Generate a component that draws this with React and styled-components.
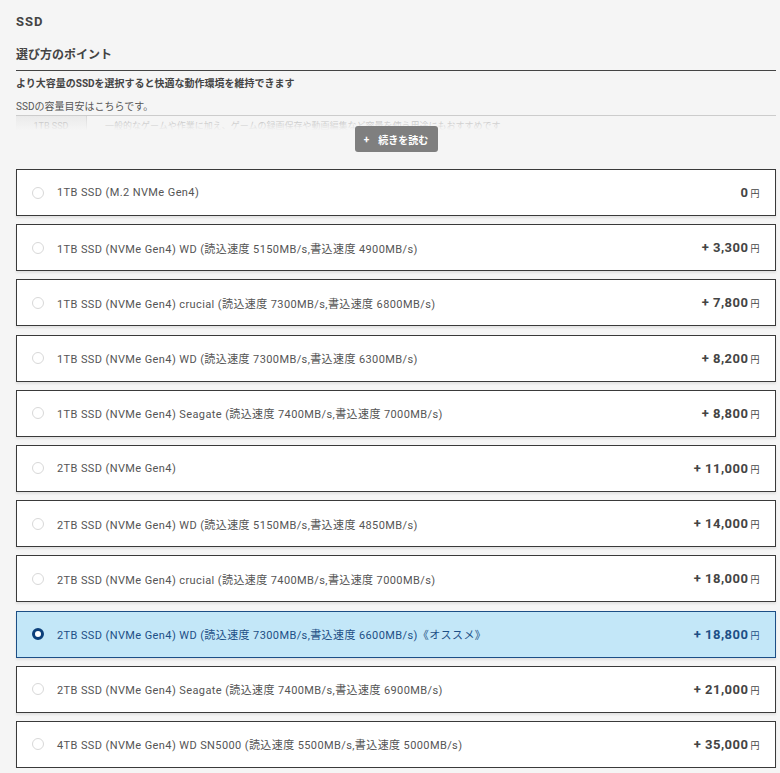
import React from "react";
import styled, { createGlobalStyle } from "styled-components";

const GlobalStyle = createGlobalStyle`
  body {
    margin: 0;
    background: #f5f5f5;
    font-family: Roboto, "Noto Sans CJK JP", sans-serif;
    color: #444;
  }
`;

const Page = styled.div`
  padding: 13px 4px 0 16px;
`;

const Title = styled.h2`
  margin: 0;
  font-size: 13px;
  font-weight: 700;
  letter-spacing: 1px;
  color: #444;
  line-height: 18px;
`;

const PointHeading = styled.h3`
  margin: 15px 0 0;
  font-size: 12px;
  font-weight: 700;
  color: #444;
  line-height: 18px;
  padding-bottom: 6px;
  border-bottom: 1px solid #444;
`;

const Lead = styled.p`
  margin: 6px 0 0;
  font-size: 10px;
  font-weight: 700;
  color: #444;
  line-height: 14px;
`;

const Note = styled.p`
  margin: 9px 0 0;
  font-size: 10px;
  color: #555;
  line-height: 14px;
`;

const Fold = styled.div`
  position: relative;
  height: 16px;
  overflow: hidden;
  border-top: 1px solid #ccc;
  margin-top: 1px;
  &::after {
    content: "";
    position: absolute;
    inset: 0;
    background: linear-gradient(rgba(245, 245, 245, 0.3), #f5f5f5 90%);
  }
`;

const FoldRow = styled.div`
  display: flex;
  font-size: 9px;
  color: #888;
  line-height: 20px;
`;

const FoldHead = styled.div`
  width: 70px;
  text-align: center;
  background: #e6e6e6;
  border-right: 1px solid #ccc;
`;

const FoldBody = styled.div`
  padding-left: 18px;
  white-space: nowrap;
`;

const MoreWrap = styled.div`
  display: flex;
  justify-content: center;
  margin-top: -6px;
  position: relative;
`;

const MoreButton = styled.button`
  display: flex;
  align-items: center;
  justify-content: center;
  gap: 9px;
  background: #7f7f7f;
  color: #fff;
  border: none;
  border-radius: 3px;
  font-family: Roboto, "Noto Sans CJK JP", sans-serif;
  font-size: 10px;
  font-weight: 700;
  height: 26px;
  width: 83px;
  padding: 0;
`;

const List = styled.div`
  display: flex;
  flex-direction: column;
  gap: 8.2px;
  margin-top: 17px;
`;

const Card = styled.label`
  display: flex;
  align-items: center;
  height: 47px;
  box-sizing: border-box;
  padding: 0 15px 0 15px;
  background: ${(p) => (p.$active ? "#c3e7f8" : "#fff")};
  border: 1px solid ${(p) => (p.$active ? "#1d4f86" : "#3a3a3a")};
  box-shadow: 0 2px 2px rgba(0, 0, 0, 0.08);
  color: ${(p) => (p.$active ? "#1d4f86" : "#555")};
`;

const Radio = styled.span`
  width: 12px;
  height: 12px;
  box-sizing: border-box;
  border-radius: 50%;
  flex: none;
  border: ${(p) => (p.$active ? "3.5px solid #0c3f7a" : "1px solid #d8d8d8")};
  background: #fff;
`;

const Label = styled.span`
  margin-left: 13px;
  font-size: 11px;
  letter-spacing: 0.4px;
  flex: 1;
  white-space: nowrap;
`;

const Price = styled.span`
  font-size: 13px;
  font-weight: 700;
  letter-spacing: 0.5px;
  color: ${(p) => (p.$active ? "#1d4f86" : "#444")};
`;

const Yen = styled.span`
  font-size: 9px;
  font-weight: 400;
  margin-left: 2px;
`;

const options = [
  ["1TB SSD (M.2 NVMe Gen4)", "0"],
  ["1TB SSD (NVMe Gen4) WD (読込速度 5150MB/s,書込速度 4900MB/s)", "+ 3,300"],
  ["1TB SSD (NVMe Gen4) crucial (読込速度 7300MB/s,書込速度 6800MB/s)", "+ 7,800"],
  ["1TB SSD (NVMe Gen4) WD (読込速度 7300MB/s,書込速度 6300MB/s)", "+ 8,200"],
  ["1TB SSD (NVMe Gen4) Seagate (読込速度 7400MB/s,書込速度 7000MB/s)", "+ 8,800"],
  ["2TB SSD (NVMe Gen4)", "+ 11,000"],
  ["2TB SSD (NVMe Gen4) WD (読込速度 5150MB/s,書込速度 4850MB/s)", "+ 14,000"],
  ["2TB SSD (NVMe Gen4) crucial (読込速度 7400MB/s,書込速度 7000MB/s)", "+ 18,000"],
  ["2TB SSD (NVMe Gen4) WD (読込速度 7300MB/s,書込速度 6600MB/s)《オススメ》", "+ 18,800"],
  ["2TB SSD (NVMe Gen4) Seagate (読込速度 7400MB/s,書込速度 6900MB/s)", "+ 21,000"],
  ["4TB SSD (NVMe Gen4) WD SN5000 (読込速度 5500MB/s,書込速度 5000MB/s)", "+ 35,000"],
];

const App = () => {
  const selected = 8;
  return (
    <Page>
      <GlobalStyle />
      <Title>SSD</Title>
      <PointHeading>選び方のポイント</PointHeading>
      <Lead>より大容量のSSDを選択すると快適な動作環境を維持できます</Lead>
      <Note>SSDの容量目安はこちらです。</Note>
      <Fold>
        <FoldRow>
          <FoldHead>1TB SSD</FoldHead>
          <FoldBody>
            一般的なゲームや作業に加え、ゲームの録画保存や動画編集など容量を使う用途にもおすすめです
          </FoldBody>
        </FoldRow>
      </Fold>
      <MoreWrap>
        <MoreButton>
          <span>+</span>
          <span>続きを読む</span>
        </MoreButton>
      </MoreWrap>
      <List>
        {options.map(([label, price], i) => (
          <Card key={label} $active={i === selected}>
            <Radio $active={i === selected} />
            <Label>{label}</Label>
            <Price $active={i === selected}>
              {price}
              <Yen>円</Yen>
            </Price>
          </Card>
        ))}
      </List>
    </Page>
  );
};

export default App;
